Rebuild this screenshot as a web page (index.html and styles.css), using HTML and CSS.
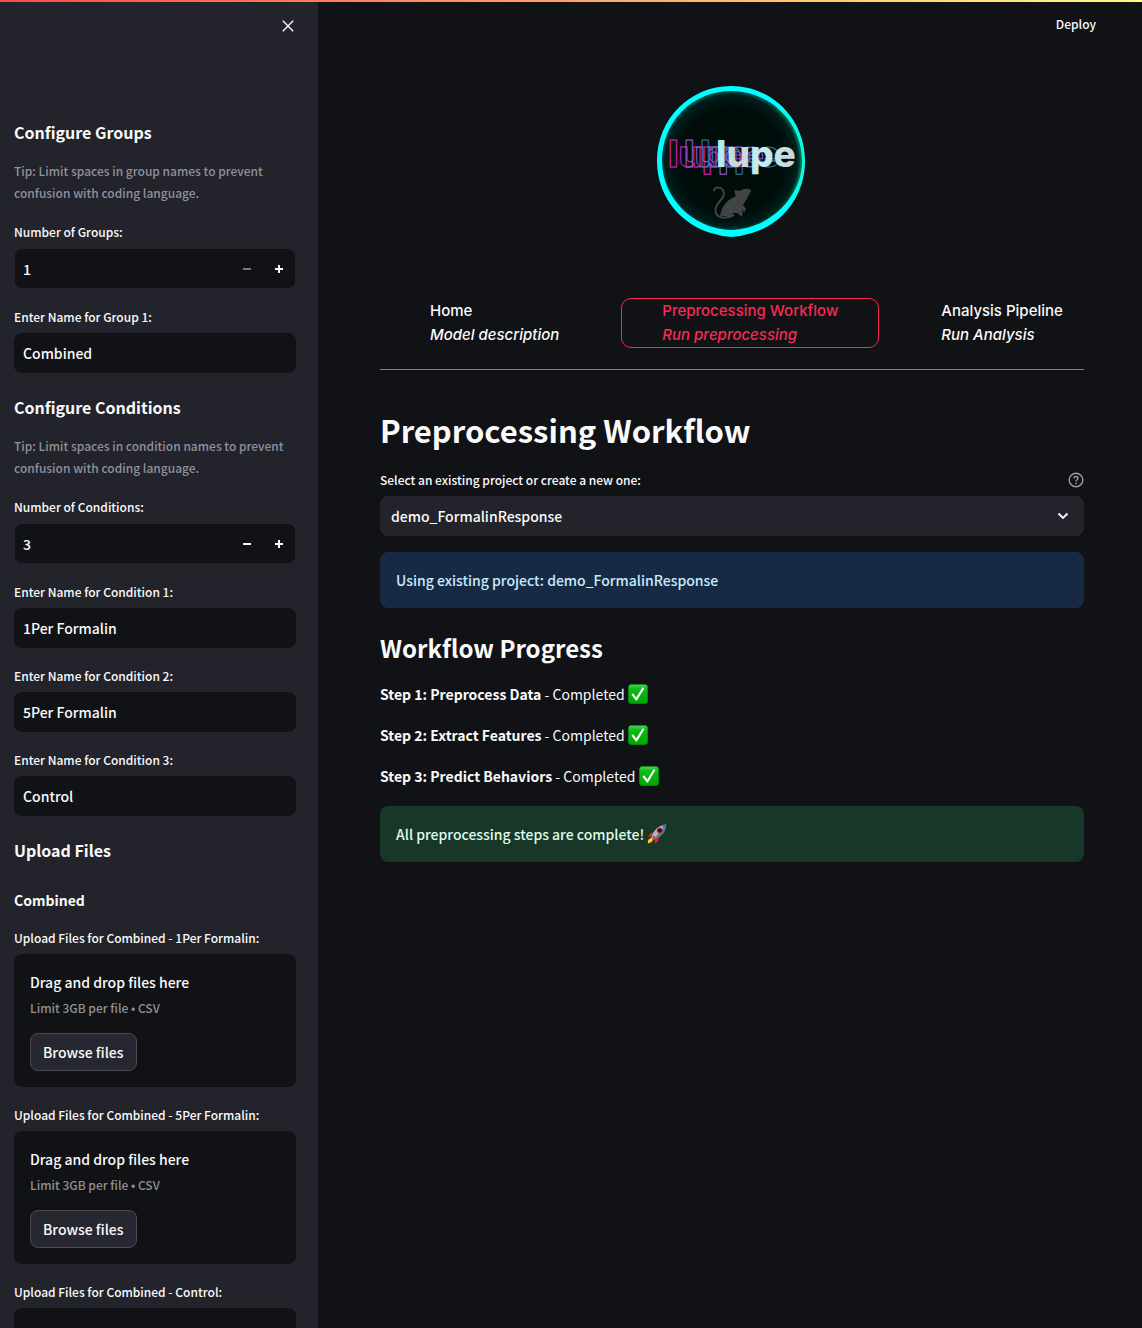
FILE: index.html
```html
<!DOCTYPE html>
<html lang="en">
<head>
<meta charset="utf-8">
<meta name="viewport" content="width=device-width, initial-scale=1">
<title>Preprocessing Workflow</title>
<link rel="stylesheet" href="styles.css">
</head>
<body>
<svg class="defs" width="0" height="0" aria-hidden="true">
  <defs>
    <linearGradient id="tick-fill" x1="0" y1="0" x2="0" y2="1">
      <stop offset="0" stop-color="#4fd35c"/><stop offset=".25" stop-color="#0cbc16"/><stop offset="1" stop-color="#00a600"/>
    </linearGradient>
    <symbol id="tick" viewBox="0 0 20 20">
      <rect x=".4" y=".4" width="19.2" height="19.2" rx="3" fill="url(#tick-fill)" stroke="#0a8f18" stroke-width=".8"/>
      <path d="M3.4 10.6 5.2 9.3 8.2 13.4 14.6 3.2 16.4 4.2 8.9 16.6 7.8 16.6Z" fill="#fff"/>
    </symbol>
    <symbol id="minus" viewBox="0 0 8 8"><path d="M0 3h8v2H0z" fill="currentColor"/></symbol>
    <symbol id="plus" viewBox="0 0 8 8"><path d="M0 3h3V0h2v3h3v2H5v3H3V5H0z" fill="currentColor"/></symbol>
  </defs>
</svg>
<div class="app">
  <aside class="sidebar">
    <div class="sidebar-top">
      <button class="icon-button" type="button" aria-label="Close sidebar">
        <svg width="12" height="12" viewBox="0 0 12 12"><path d="M.8.8 11.2 11.2M11.2.8.8 11.2" stroke="currentColor" stroke-width="1.4" fill="none"/></svg>
      </button>
    </div>

    <h2 class="section-title">Configure Groups</h2>
    <p class="tip">Tip: Limit spaces in group names to prevent confusion with coding language.</p>
    <div class="field">
      <label for="groups">Number of Groups:</label>
      <div class="number">
        <input id="groups" type="text" inputmode="numeric" value="1">
        <button type="button" aria-label="Fewer groups" disabled><svg width="8" height="8"><use href="#minus"/></svg></button>
        <button type="button" aria-label="More groups"><svg width="8" height="8"><use href="#plus"/></svg></button>
      </div>
    </div>
    <div class="field">
      <label for="group-1">Enter Name for Group 1:</label>
      <input class="text" id="group-1" type="text" value="Combined">
    </div>

    <h2 class="section-title">Configure Conditions</h2>
    <p class="tip">Tip: Limit spaces in condition names to prevent confusion with coding language.</p>
    <div class="field">
      <label for="conditions">Number of Conditions:</label>
      <div class="number">
        <input id="conditions" type="text" inputmode="numeric" value="3">
        <button type="button" aria-label="Fewer conditions"><svg width="8" height="8"><use href="#minus"/></svg></button>
        <button type="button" aria-label="More conditions"><svg width="8" height="8"><use href="#plus"/></svg></button>
      </div>
    </div>
    <div class="field">
      <label for="cond-1">Enter Name for Condition 1:</label>
      <input class="text" id="cond-1" type="text" value="1Per Formalin">
    </div>
    <div class="field">
      <label for="cond-2">Enter Name for Condition 2:</label>
      <input class="text" id="cond-2" type="text" value="5Per Formalin">
    </div>
    <div class="field">
      <label for="cond-3">Enter Name for Condition 3:</label>
      <input class="text" id="cond-3" type="text" value="Control">
    </div>

    <h2 class="section-title">Upload Files</h2>
    <h3 class="group-title">Combined</h3>
    <div class="field">
      <span class="label" id="up-1">Upload Files for Combined - 1Per Formalin:</span>
      <div class="drop" role="group" aria-labelledby="up-1">
        <span>Drag and drop files here</span>
        <small>Limit 3GB per file • CSV</small>
        <button class="browse" type="button">Browse files</button>
      </div>
    </div>
    <div class="field">
      <span class="label" id="up-2">Upload Files for Combined - 5Per Formalin:</span>
      <div class="drop" role="group" aria-labelledby="up-2">
        <span>Drag and drop files here</span>
        <small>Limit 3GB per file • CSV</small>
        <button class="browse" type="button">Browse files</button>
      </div>
    </div>
    <div class="field">
      <span class="label" id="up-3">Upload Files for Combined - Control:</span>
      <div class="drop" role="group" aria-labelledby="up-3">
        <span>Drag and drop files here</span>
        <small>Limit 3GB per file • CSV</small>
        <button class="browse" type="button">Browse files</button>
      </div>
    </div>
  </aside>

  <main class="main">
    <header class="toolbar"><button class="deploy" type="button">Deploy</button></header>

    <svg class="logo" width="152" height="156" viewBox="1 0 152 156" role="img" aria-label="Lupe">
      <defs>
        <radialGradient id="disc"><stop offset=".75" stop-color="#010d0b"/><stop offset=".92" stop-color="#001f1c"/><stop offset="1" stop-color="#00807c"/></radialGradient>
        <linearGradient id="ring" x1="0" y1="0" x2="1" y2="0"><stop offset=".85" stop-color="#00ffff"/><stop offset="1" stop-color="#10f8e0"/></linearGradient>
        <linearGradient id="face" x1="0" y1="0" x2="1" y2="0"><stop offset="0" stop-color="#a9f4f6"/><stop offset=".3" stop-color="#d0d3d4"/><stop offset=".55" stop-color="#c5f0f2"/><stop offset="1" stop-color="#cfd2d3"/></linearGradient>
      </defs>
      <circle cx="76" cy="77" r="72" fill="url(#disc)"/>
      <path d="M122 24A70 70 0 0 1 125 127" fill="none" stroke="#0a7a2c" stroke-width="2" opacity=".7"/>
      <path fill="url(#ring)" fill-rule="evenodd" d="M76 2C117 2 150 35 150 77 150 115 124 143 93 150Q76 156 60 150C29 143 2 115 2 77 2 35 35 2 76 2ZM76 7C37 7 7 38 7 77 7 114 38 145 76 146 114 145 147 114 147 77 147 38 115 7 76 7Z"/>
      <g class="logo-word">
        <text class="ghost" x="13" y="83" stroke="#e21bd2">lupe</text>
        <text class="ghost" x="29" y="83" stroke="#8a63e6">lupe</text>
        <text class="ghost" x="45" y="83" stroke="#3279bb">lupe</text>
        <text x="61" y="83" fill="url(#face)">lupe</text>
      </g>
      <path d="M79 131C65 138 57 130 62 121 66 115 71 112 68 106 65 102 59 103 59 107" fill="none" stroke="#424344" stroke-width="2"/>
      <path d="M65 132C67 119 75 115 81 112Q79 108 80 106L84 107Q89 104 95 105L96 107Q92 115 88 121L91 125 89 129 87 124Q88 130 87 133L82 129 77 129 80 132Z" fill="#424344"/>
    </svg>

    <nav class="tabs" aria-label="Pages">
      <a class="tab" href="#home">Home<em>Model description</em></a>
      <a class="tab active" href="#preprocessing" aria-current="page">Preprocessing Workflow<em>Run preprocessing</em></a>
      <a class="tab" href="#analysis">Analysis Pipeline<em>Run Analysis</em></a>
    </nav>

    <h1>Preprocessing Workflow</h1>

    <div class="label-row">
      <label for="project">Select an existing project or create a new one:</label>
      <button class="help" type="button" aria-label="Help">
        <svg width="16" height="16" viewBox="0 0 16 16" fill="none" stroke="currentColor" stroke-width="1.4"><circle cx="8" cy="8" r="6.8"/><path d="M6 6.3C6 3.8 10 3.9 10 6.2 10 7.7 8 7.8 8 9.4M8 10.8v1.4"/></svg>
      </button>
    </div>
    <div class="select">
      <select id="project"><option>demo_FormalinResponse</option></select>
      <svg width="12" height="8" viewBox="0 0 12 8"><path d="M1.5 1.5 6 6 10.5 1.5" fill="none" stroke="currentColor" stroke-width="1.8"/></svg>
    </div>

    <p class="alert info">Using existing project: demo_FormalinResponse</p>

    <h2 class="progress-title">Workflow Progress</h2>
    <p class="step"><strong>Step 1: Preprocess Data</strong> - Completed <svg class="emoji" width="20" height="20" role="img" aria-label="done"><use href="#tick"/></svg></p>
    <p class="step"><strong>Step 2: Extract Features</strong> - Completed <svg class="emoji" width="20" height="20" role="img" aria-label="done"><use href="#tick"/></svg></p>
    <p class="step"><strong>Step 3: Predict Behaviors</strong> - Completed <svg class="emoji" width="20" height="20" role="img" aria-label="done"><use href="#tick"/></svg></p>

    <p class="alert success">All preprocessing steps are complete!
      <svg class="emoji" width="20" height="20" viewBox="0 0 20 20" role="img" aria-label="rocket">
        <path d="M7 8 3 9.5 1 13 6 12Z M12 13 11 17.5 7.5 19.5 8 14Z" fill="#d8261c"/>
        <path d="M4.5 13.5 1 16 .8 19.4 4 18.5 6.5 15.5Z" fill="#fbc02d"/>
        <path d="M4.5 14.5 3 17 5.5 16Z" fill="#fff3a0"/>
        <path d="M4.5 13.5C6 7 11 1.5 19.2.6 18.8 8 13.5 13.5 6.5 15.5Z" fill="#a9b9c8"/>
        <path d="M6.5 15.5C13.5 13.5 18.8 8 19.2.6Z" fill="#62798f"/>
        <path d="M15 1.7 19.2.6 18.4 5Q16 4.5 15 1.7Z" fill="#3778b5"/>
        <circle cx="12.8" cy="6.5" r="2.5" fill="#2a1115" stroke="#c4282a"/>
        <path d="M6.5 11.5 8.5 13.5 5 16Z" fill="#e0331e"/>
      </svg>
    </p>
  </main>
</div>
</body>
</html>
```
FILE: styles.css
```css
:root {
  --bg: #111216;
  --panel: #23232b;
  --text: #fafafa;
  --muted: #8f909c;
  --accent: #f92855;
  --sans: "Noto Sans CJK JP", "Noto Sans CJK SC", "Noto Sans", sans-serif;
}

* { box-sizing: border-box; }

body {
  margin: 0;
  background: var(--bg);
  color: var(--text);
  font: 500 14px/24px var(--sans);
}

body::before {
  content: "";
  position: fixed;
  inset: 0 0 auto;
  height: 2px;
  background: linear-gradient(90deg, #ff4b4b, #fffd80);
  z-index: 1;
}

h1, h2, h3, p { margin: 0; }

button, input, select {
  font: inherit;
  color: inherit;
  background: none;
  border: 0;
  padding: 0;
}

.defs { display: block; }

.app {
  display: flex;
  height: 100vh;
}

/* Sidebar */
.sidebar {
  flex: 0 0 318px;
  padding: 0 22px 18px 14px;
  background: var(--panel);
  overflow-y: auto;
  scrollbar-width: none;
}

.sidebar-top {
  display: flex;
  justify-content: flex-end;
  height: 98px;
  padding-top: 18px;
}

.icon-button {
  display: grid;
  place-items: center;
  width: 16px;
  height: 16px;
}

.section-title {
  margin: 22px 0 16px;
  font-size: 16px;
  font-weight: 700;
}

.group-title {
  margin: 28px 0 18px;
  font-size: 14px;
  line-height: 20px;
  font-weight: 700;
}

.tip {
  font-size: 12px;
  line-height: 22px;
  color: var(--muted);
}

.field, .tip { margin-bottom: 18px; }

label, .label {
  display: block;
  margin-bottom: 6px;
  font-size: 12px;
  line-height: 20px;
}

.text, .number {
  width: 100%;
  height: 40px;
  border-radius: 8px;
  background: var(--bg);
}

.text { display: block; padding: 0 9px; }

.number {
  display: flex;
  border: 1px solid var(--panel);
  height: 41px;
}

.number input { flex: 1; min-width: 0; padding-left: 8px; }

.number button { display: grid; place-items: center; width: 32px; }
.number button:disabled { color: #777986; }

.drop {
  display: flex;
  flex-direction: column;
  align-items: flex-start;
  padding: 16px;
  border-radius: 8px;
  background: var(--bg);
  line-height: 25px;
}

.drop small { font-size: 12px; color: #909094; }

.browse {
  height: 38px;
  margin-top: 13px;
  padding: 0 12px;
  border: 1px solid #4b4b54;
  border-radius: 8px;
  background: #262730;
}

/* Main column */
.main {
  flex: 1;
  min-width: 0;
  display: flex;
  flex-direction: column;
  padding: 0 58px 0 62px;
  overflow-y: auto;
}

.toolbar { display: flex; justify-content: flex-end; height: 84px; padding-top: 12px; margin-right: -12px; }
.deploy { height: 24px; font-size: 12px; }

.logo { align-self: center; flex: none; }
.logo-word { font: 800 37px "Inter", sans-serif; }
.ghost { fill: none; stroke-width: 1; }

.tabs {
  display: flex;
  gap: 21px;
  margin-top: 58px;
  padding: 0 0 21px 9px;
  border-bottom: 1px solid #ff4b4b;
  font: 500 15px/24px "Inter", sans-serif;
}

.tab {
  flex: none;
  padding: 0 40px;
  border: 1px solid transparent;
  border-radius: 10px;
  color: inherit;
  text-decoration: none;
}

.tab em { display: block; }
.tab.active { color: var(--accent); border-color: var(--accent); }

h1 {
  margin: 36px 0 16px;
  font-size: 31px;
  line-height: 48px;
  font-weight: 700;
}

.label-row { display: flex; justify-content: space-between; }
.help { height: 20px; color: #9c9da1; }
.help svg { display: block; }

.select { display: grid; align-items: center; color: var(--text); }
.select > * { grid-area: 1 / 1; }
.select select {
  width: 100%;
  height: 40px;
  padding: 0 11px;
  border-radius: 8px;
  background: var(--panel);
  appearance: none;
}
.select svg { justify-self: end; margin-right: 15px; pointer-events: none; }

.alert { padding: 16px; border-radius: 8px; }
.info { margin-top: 16px; background: #182a43; color: #c7ebff; }
.success { margin-top: 18px; background: #193728; color: #dffde9; }

.progress-title {
  margin: 22px 0 16px;
  font-size: 24px;
  line-height: 36px;
  font-weight: 700;
}

.step { font-weight: 400; }
.step + .step { margin-top: 17px; }
.step strong { font-weight: 700; }
.emoji { vertical-align: -4px; }
```
